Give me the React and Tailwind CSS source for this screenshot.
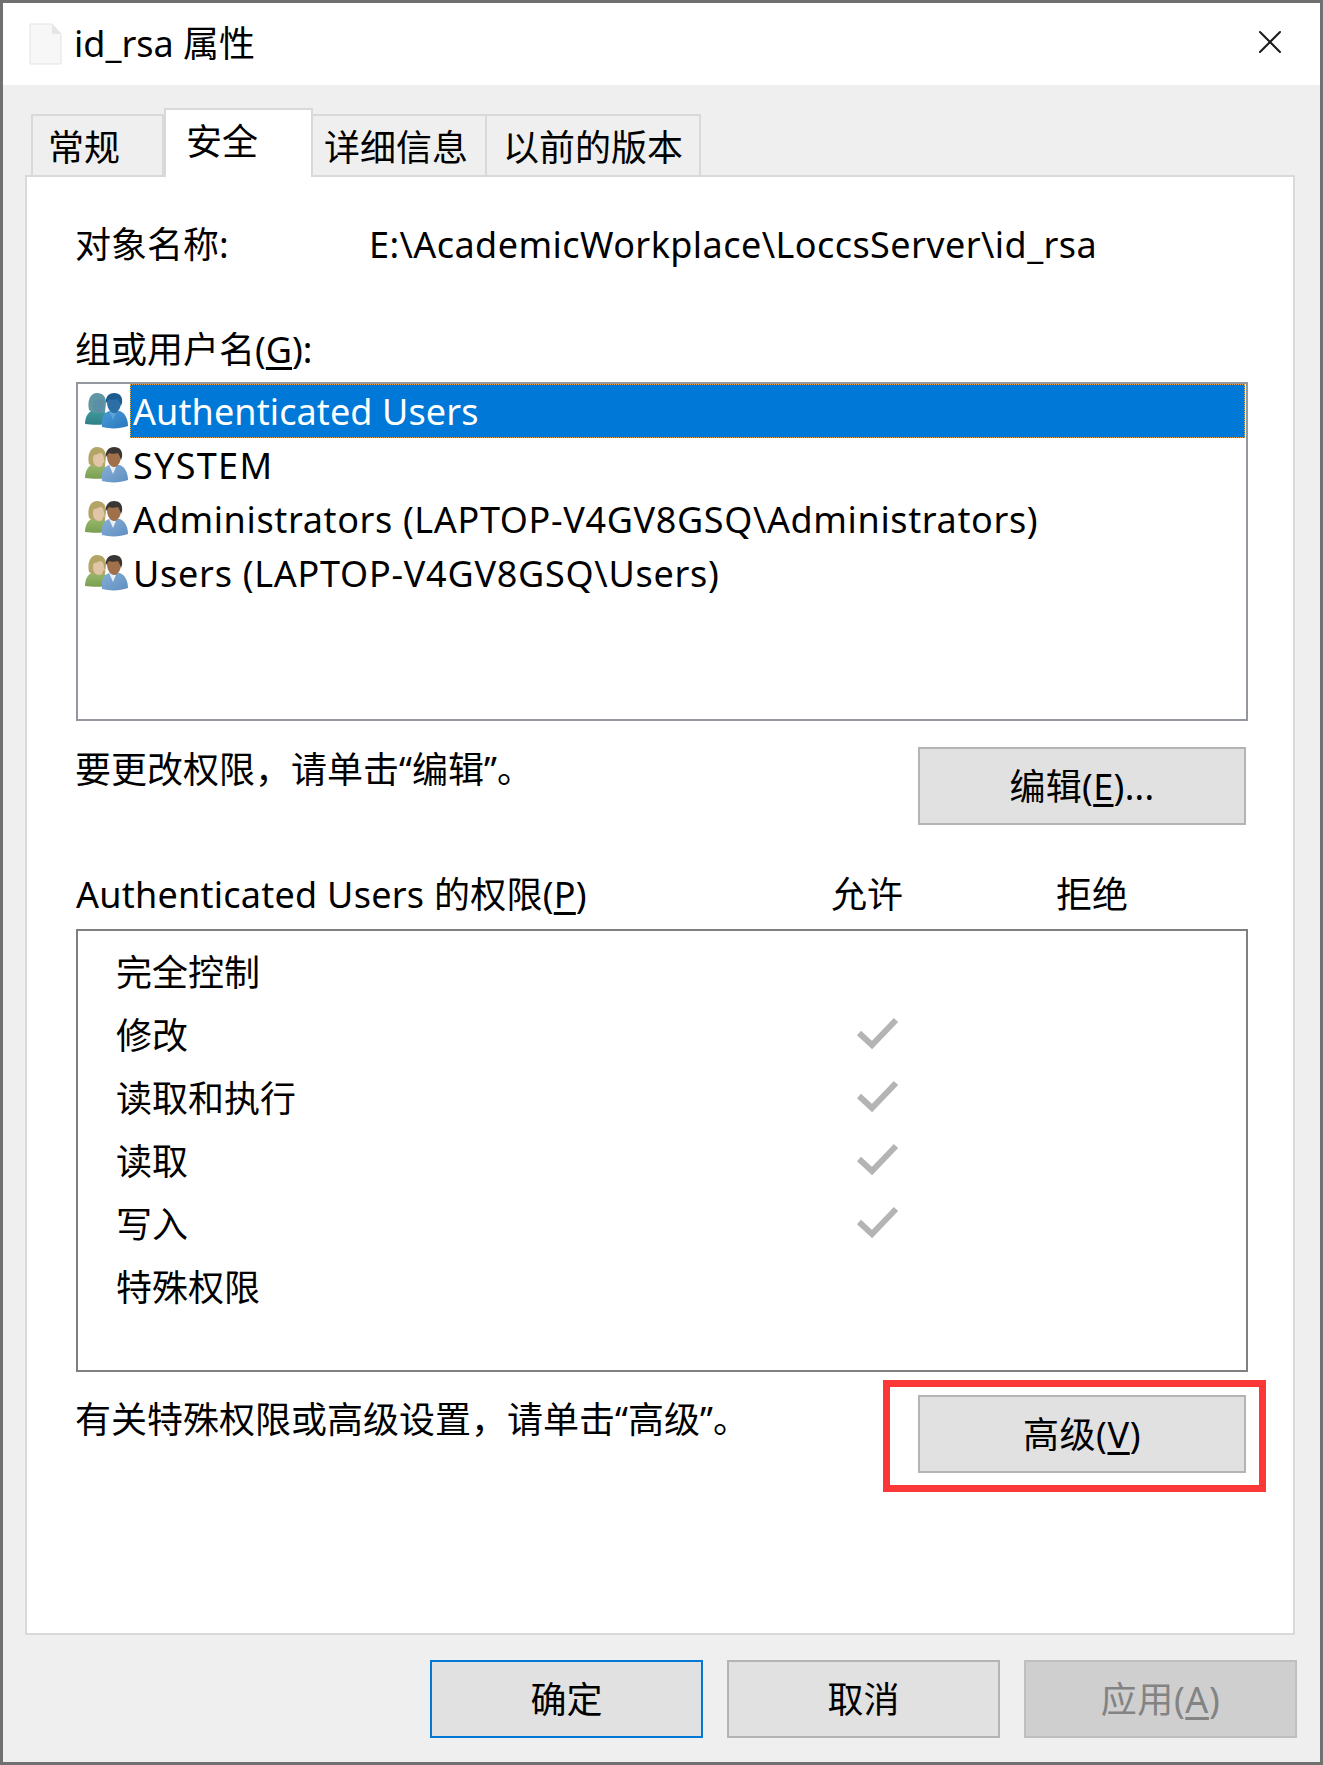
import { X } from 'lucide-react'

const font = { fontFamily: '"Noto Sans", "Noto Sans CJK SC", sans-serif' }

// full-width comma, written as an escape so it stays U+FF0C
const comma = '\uFF0C'

function UsersIcon({ id, selected }) {
  const c = selected
    ? { hairL: '#5f97a3', skinL: '#5b8fa6', shirtL: '#3f9a9a', shirtL2: '#2f8088', hairR: '#1c5b8f', skinR: '#2c6ea6', shirtR: '#4a9ad8', shirtR2: '#2a78bd', collar: '#5aa5d8' }
    : { hairL: '#b3a566', skinL: '#e0c5a6', shirtL: '#98ba6c', shirtL2: '#7a9e52', hairR: '#3a3633', skinR: '#a0704a', shirtR: '#86aed8', shirtR2: '#5f8fc0', collar: '#e6eef6' }
  return (
    <svg width="43" height="36" viewBox="0 0 43 36" className="shrink-0">
      <defs>
        <linearGradient id={`l${id}`} x1="0" y1="0" x2="0" y2="1">
          <stop offset="0" stopColor={c.shirtL} />
          <stop offset="1" stopColor={c.shirtL2} />
        </linearGradient>
        <linearGradient id={`r${id}`} x1="0" y1="0" x2="1" y2="1">
          <stop offset="0" stopColor={c.shirtR} />
          <stop offset="1" stopColor={c.shirtR2} />
        </linearGradient>
      </defs>
      <path d="M0 31c0-7 3-12 8-14h9c4 2 6 6 6 14-7 1-16 1-23 0z" fill={`url(#l${id})`} />
      <path d="M4 17C2 8 5 0 12 0c6 0 9 4 9 10l-1 9c-5 2-12 1-16-2z" fill={c.hairL} />
      <path d="M9 8c3 0 5-2 7-2 2 1 3 3 3 7l1 2-2 1c0 3-2 4-4 4-3 0-6-3-6-7 0-2 0-4 1-5z" fill={c.skinL} />
      <path d="M17 34c-1-8 1-14 7-16h11c5 2 8 8 8 15-8 3-18 3-26 1z" fill={`url(#r${id})`} />
      <path d="M24 18l4 9 3-7z" fill={c.collar} />
      <path d="M22 9c0-5 3-8 7-8s7 3 7 8c0 6-3 11-7 11-3 0-7-4-7-11z" fill={c.skinR} />
      <path d="M21 10c-1-6 3-10 8-10 6 0 9 4 8 10l-1 3c-1-4-2-5-3-7-3 1-7 1-9 0-1 1-2 3-3 4z" fill={c.hairR} />
    </svg>
  )
}

function Check() {
  return (
    <svg width="43" height="34" viewBox="0 0 43 34" className="absolute left-[740px] top-[13px]">
      <path d="M3 16l13 12L40 3" fill="none" stroke="#b4b4b4" strokeWidth="6" />
    </svg>
  )
}

function Btn({ children, className = 'bg-[#e1e1e1] border-[#b4b4b4]' }) {
  return (
    <div className={`w-[273px] h-[78px] flex items-center justify-center border-2 pt-[1px] ${className}`}>{children}</div>
  )
}

const users = [
  ['Authenticated Users', 'tracking-[0.1px]'],
  ['SYSTEM', 'tracking-[1.3px]'],
  ['Administrators (LAPTOP-V4GV8GSQ\\Administrators)', 'tracking-[0.63px]'],
  ['Users (LAPTOP-V4GV8GSQ\\Users)', 'tracking-[0.73px]'],
]

const perms = [
  ['完全控制', false],
  ['修改', true],
  ['读取和执行', true],
  ['读取', true],
  ['写入', true],
  ['特殊权限', false],
]

export default function App() {
  return (
    <div style={font} className="w-[1323px] h-[1765px] bg-[#707070] pt-[3px] pl-[3px] pr-[3px] pb-[3px] text-[36px] text-black overflow-hidden">
      <div className="h-[1759px] flex flex-col bg-[#efefef]">
        <div className="h-[82px] bg-white flex items-center pl-[26px] pr-[30px]">
          <svg width="33" height="42" viewBox="0 0 33 42" className="shrink-0">
            <path d="M1 1h22l9 10v30H1z" fill="#f7f7f7" stroke="#e3e3e3" strokeWidth="1" />
            <path d="M23 1v10h9z" fill="#e6e6e6" />
          </svg>
          <span className="ml-[12px] flex-1 leading-[54px]">id_rsa 属性</span>
          <X size={40} strokeWidth={1.2} className="text-[#1a1a1a] mb-[4px]" />
        </div>

        <div className="flex items-end h-[92px] pl-[28px] relative z-10 -mb-[2px] leading-[54px]">
          <div className="w-[133px] h-[63px] border-2 border-[#d9d9d9] border-b-0 flex items-center pl-[15px] pt-[3px]">常规</div>
          <div className="w-[149px] h-[69px] border-2 border-[#d9d9d9] border-b-0 bg-white pl-[20px] pt-[5px]">安全</div>
          <div className="w-[174px] h-[63px] border-2 border-l-0 border-[#d9d9d9] border-b-0 flex items-center pl-[11px] pt-[3px]">详细信息</div>
          <div className="w-[214px] h-[63px] border-2 border-l-0 border-[#d9d9d9] border-b-0 flex items-center pl-[16px] pt-[3px]">以前的版本</div>
        </div>

        <div className="ml-[22px] mr-[25px] h-[1460px] bg-white border-2 border-[#d9d9d9] pl-[49px] pr-[45px] leading-[54px]">
          <div className="flex mt-[41px] -ml-px">
            <span className="w-[294px]">对象名称:</span>
            <span className="tracking-[0.43px]">E:\AcademicWorkplace\LoccsServer\id_rsa</span>
          </div>
          <div className="mt-[51px] -ml-px">组或用户名(<u className="underline-offset-4">G</u>):</div>
          <div className="mt-[5px] h-[339px] border-2 border-[#93979e] pl-[7px] pr-[1px]">
            {users.map(([u, track], i) => (
              <div key={u} className="h-[54px] flex items-center">
                <UsersIcon id={i} selected={i === 0} />
                {i === 0 ? (
                  <span className={`flex-1 ml-[2px] pl-[2px] h-[54px] bg-[#0078d7] text-white border border-dotted border-[#f0a040] ${track}`}>{u}</span>
                ) : (
                  <span className={`ml-[2px] pl-[3px] pt-[1px] ${track}`}>{u}</span>
                )}
              </div>
            ))}
          </div>

          <div className="flex justify-between items-start mt-[22px] pr-[2px]">
            <span className="-ml-px">要更改权限{comma}请单击“编辑”。</span>
            <div className="mt-[4px] w-[328px] h-[78px] bg-[#e1e1e1] border-2 border-[#b4b4b4] flex items-center justify-center pt-[1px]">
              <span className="tracking-[0.3px]">编辑(<u className="underline-offset-4">E</u>)...</span>
            </div>
          </div>

          <div className="flex mt-[43px]">
            <span className="w-[755px] tracking-[0.25px]">Authenticated Users 的权限(<u className="underline-offset-4">P</u>)</span>
            <span className="w-[225px]">允许</span>
            <span>拒绝</span>
          </div>
          <div className="mt-[7px] h-[443px] border-2 border-[#808080] pl-[38px] pt-[10px]">
            {perms.map(([p, checked]) => (
              <div key={p} className="h-[63px] flex items-center relative">
                {p}
                {checked && <Check />}
              </div>
            ))}
          </div>

          <div className="flex justify-between items-start mt-[21px] pr-[2px]">
            <span className="-ml-px">有关特殊权限或高级设置{comma}请单击“高级”。</span>
            <div className="relative mt-[2px] w-[328px] h-[78px] bg-[#e1e1e1] border-2 border-[#b4b4b4] flex items-center justify-center pt-[1px]">
              <span className="tracking-[0.6px]">高级(<u className="underline-offset-4">V</u>)</span>
              <div className="absolute -left-[37px] -right-[22px] -top-[17px] -bottom-[21px] border-[7px] border-[#fc3737]" />
            </div>
          </div>
        </div>

        <div className="flex justify-end gap-[24px] pt-[25px] pr-[23px]">
          <Btn className="bg-[#e1e1e1] border-[#0078d7]">确定</Btn>
          <Btn>取消</Btn>
          <Btn className="bg-[#cfcfcf] border-[#bfbfbf] text-[#838383]">
            <span className="tracking-[0.6px]">应用(<u className="underline-offset-4">A</u>)</span>
          </Btn>
        </div>
      </div>
    </div>
  )
}
